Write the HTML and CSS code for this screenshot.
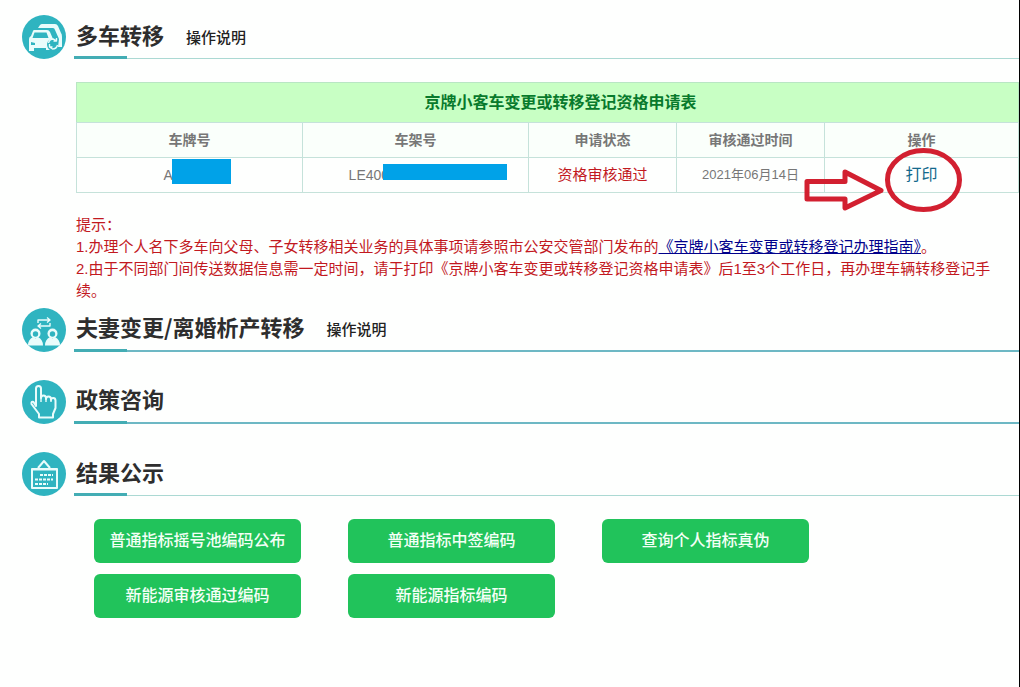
FILE: index.html
```html
<!DOCTYPE html>
<html lang="zh-CN">
<head>
<meta charset="utf-8">
<title>小客车指标办理</title>
<link rel="stylesheet" href="styles.css">
</head>
<body>
<main class="page">
  <section class="section">
    <header class="section-head">
      <svg class="badge" viewBox="0 0 44 44" aria-hidden="true">
        <circle class="disc" cx="22" cy="22" r="22"/>
        <path class="solid" d="M16 13l2-3q1-1 2-1h13q2 0 3 2l3 7q1 1 1 4v10h-4l1-8-4-9q-.5-2-2-2H19z"/>
        <path class="solid" d="M12 15h13q2 0 3 2l3 7q-5 0-6 5 0 4 3 6h-4v-2H12v3H7V24q0-2 2-3l2-5q.4-1 1-1z"/>
        <path class="cut" d="M12.500 17.500h12l2 5.500H10.500zM9 27l4 1v2H9z"/>
        <path class="line thin" d="M26.500 28q1-4 5-4l3 2m1 4q-1 4-5 4l-3-2m7-9v3h-3m-4 3v3h3"/>
      </svg>
      <div class="title-bar">
        <h2>多车转移</h2>
        <a class="guide" href="#guide-transfer">操作说明</a>
      </div>
    </header>
    <div class="section-body">
      <table class="records">
        <caption>京牌小客车变更或转移登记资格申请表</caption>
        <colgroup>
          <col class="col-wide"><col class="col-wide"><col class="col-mid"><col class="col-mid"><col>
        </colgroup>
        <thead>
          <tr><th scope="col">车牌号</th><th scope="col">车架号</th><th scope="col">申请状态</th><th scope="col">审核通过时间</th><th scope="col">操作</th></tr>
        </thead>
        <tbody>
          <tr>
            <td><span class="masked masked-plate">A</span></td>
            <td><span class="masked masked-frame">LE400</span></td>
            <td class="status">资格审核通过</td>
            <td>2021年06月14日</td>
            <td>
              <span class="action">
                <a class="print" href="#print">打印</a>
                <svg class="marker" viewBox="0 0 158 64" aria-hidden="true">
                  <path d="M3 33.500h38V24l36 18.500L41 60V51H3z"/>
                  <ellipse cx="119.500" cy="32" rx="36" ry="29.500"/>
                </svg>
              </span>
            </td>
          </tr>
        </tbody>
      </table>
      <div class="notes">
        <p>提示：</p>
        <p>1.办理个人名下多车向父母、子女转移相关业务的具体事项请参照市公安交管部门发布的<a href="#manual">《京牌小客车变更或转移登记办理指南》</a>。</p>
        <p>2.由于不同部门间传送数据信息需一定时间，请于打印《京牌小客车变更或转移登记资格申请表》后1至3个工作日，再办理车辆转移登记手<br>续。</p>
      </div>
    </div>
  </section>

  <section class="section">
    <header class="section-head">
      <svg class="badge" viewBox="0 0 44 44" aria-hidden="true">
        <circle class="disc" cx="22" cy="22" r="22"/>
        <path class="line thin" d="M16 15v-3h12m-3-2.500l3 2.500-3 2.500M28 15v3H16m3-2.500L16 18l3 2.500"/>
        <path class="solid" d="M6 37.500q0-6 5-8.500l2.500 1.500L16 29q5 2.500 5 8.500zM23 37.500q0-6 5-8.500l2.500 1.500L33 29q5 2.500 5 8.500z"/>
        <circle class="solid" cx="13.500" cy="25.500" r="5"/>
        <circle class="solid" cx="30.500" cy="25.500" r="5"/>
        <circle class="cut" cx="13.500" cy="26" r="2.700"/>
        <circle class="cut" cx="30.500" cy="26" r="2.700"/>
      </svg>
      <div class="title-bar strong">
        <h2>夫妻变更/离婚析产转移</h2>
        <a class="guide" href="#guide-couple">操作说明</a>
      </div>
    </header>
  </section>

  <section class="section spaced">
    <header class="section-head">
      <svg class="badge" viewBox="0 0 44 44" aria-hidden="true">
        <circle class="disc" cx="22" cy="22" r="22"/>
        <path class="line" d="M14 26V8.500Q14 6 16.500 6T19 8.500V18q0-2.500 2.500-2.500T24 18v1q0-2.500 2.500-2.500T29 19v1q0-2 2.200-2t2.300 2.500V28L31 34v3.500H17V34l-7.500-10q-.5-3 2-2z"/>
        <path class="line thin" d="M19 17v5M24 18v4M29 19v3"/>
      </svg>
      <div class="title-bar strong">
        <h2>政策咨询</h2>
      </div>
    </header>
  </section>

  <section class="section spaced">
    <header class="section-head">
      <svg class="badge" viewBox="0 0 44 44" aria-hidden="true">
        <circle class="disc" cx="22" cy="22" r="22"/>
        <path class="line" d="M10 17h25v19H10zM16 16l6-7 6 7M9 17.500h27"/>
        <path class="line dashes" d="M18 23h13M13 27.500h18M13 32h13"/>
      </svg>
      <div class="title-bar">
        <h2>结果公示</h2>
      </div>
    </header>
    <div class="results">
      <button type="button">普通指标摇号池编码公布</button>
      <button type="button">普通指标中签编码</button>
      <button type="button">查询个人指标真伪</button>
      <button type="button">新能源审核通过编码</button>
      <button type="button">新能源指标编码</button>
    </div>
  </section>
</main>
</body>
</html>
```
FILE: styles.css
```css
* {
  box-sizing: border-box;
}

body {
  margin: 0;
  background: #fefffe;
  color: #777;
  font: 13px/22px "Liberation Sans", "Noto Sans CJK SC", sans-serif;
}

.page {
  min-height: 100vh;
  padding: 15px 0 16px 22px;
  border-right: 1px solid #000;
}

.spaced {
  margin-top: 28px;
}

.section-head {
  display: flex;
  gap: 8px;
}

.badge {
  flex: none;
  width: 44px;
  height: 44px;
}

.disc {
  fill: #2fb4c0;
}

.line {
  fill: none;
  stroke: #e9fcfb;
  stroke-width: 2;
  stroke-linejoin: round;
}

.thin {
  stroke-width: 1.4;
}

.dashes {
  stroke-dasharray: 3 1;
}

.solid {
  fill: #e9fcfb;
}

.cut {
  fill: #2fb4c0;
}

.title-bar {
  position: relative;
  display: flex;
  flex: 1;
  align-items: center;
  gap: 22px;
  padding-left: 2px;
  border-bottom: 1px solid #abd9d3;
}

.title-bar.strong {
  border-bottom: 2px solid #6db8c4;
}

.title-bar::after {
  content: "";
  position: absolute;
  left: 0;
  bottom: -1px;
  width: 53px;
  height: 3px;
  background: #43adb4;
}

.title-bar.strong::after {
  bottom: -2px;
}

h2 {
  margin: 0;
  padding-bottom: 6px;
  color: #2e2e2e;
  font-family: "Noto Sans CJK SC", sans-serif;
  font-size: 22px;
  line-height: 32px;
}

.guide {
  padding-top: 2px;
  color: #222;
  font-size: 15px;
  font-weight: 500;
  text-decoration: none;
}

.section-body {
  padding: 23px 0 6px 54px;
}

.records {
  width: 100%;
  table-layout: fixed;
  border-collapse: collapse;
}

.records caption {
  height: 40px;
  padding-left: 26px;
  border: 1px solid #b9e6c4;
  border-bottom: 0;
  background: #c8ffc4;
  color: #087a2c;
  font-size: 16px;
  font-weight: 700;
  line-height: 40px;
}

.col-wide {
  width: 24%;
}

.col-mid {
  width: 15.7%;
}

.records th,
.records td {
  height: 35px;
  padding: 0;
  border: 1px solid #c5e2da;
  text-align: center;
}

.records th {
  background: #fafffb;
  font-size: 14px;
}

.records .status {
  color: #c2191f;
  font-size: 15px;
}

.masked {
  position: relative;
  display: inline-block;
  font-size: 14px;
  text-align: left;
}

.masked::after {
  content: "";
  position: absolute;
  background: #00a2e8;
}

.masked-plate {
  width: 52px;
}

.masked-plate::after {
  left: 8px;
  top: -5px;
  width: 59px;
  height: 25px;
}

.masked-frame {
  width: 134px;
}

.masked-frame::after {
  left: 34px;
  top: 0;
  width: 124px;
  height: 16px;
}

.action {
  position: relative;
  display: inline-block;
}

.print {
  color: #13698c;
  font-size: 16px;
  text-decoration: none;
}

.marker {
  position: absolute;
  left: -101px;
  top: -16px;
  width: 158px;
  height: 64px;
  pointer-events: none;
}

.marker path,
.marker ellipse {
  fill: none;
  stroke: #d22030;
  stroke-width: 5;
  stroke-linejoin: round;
}

.notes {
  margin-top: 21px;
  color: #c2191f;
  font-size: 15px;
}

.notes p {
  margin: 0;
}

.notes a {
  color: #00008b;
}

.results {
  display: grid;
  grid-template-columns: repeat(auto-fill, 207px);
  gap: 11px 47px;
  padding: 23px 72px 0;
}

.results button {
  height: 44px;
  padding: 0;
  border: 0;
  border-radius: 6px;
  background: #21c35b;
  color: #f4fff6;
  font: 500 16px/22px "Liberation Sans", "Noto Sans CJK SC", sans-serif;
}
```
